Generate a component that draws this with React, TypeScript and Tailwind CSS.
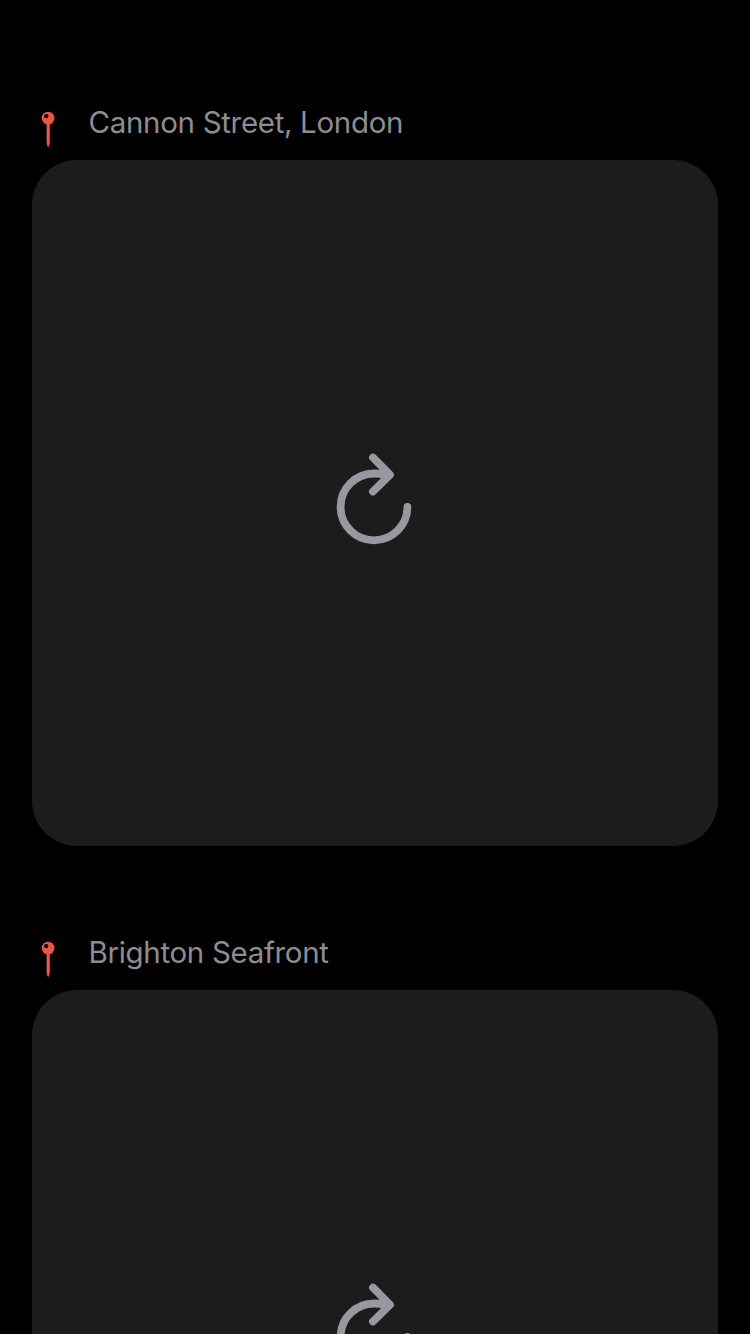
function PinIcon() {
  return (
    <svg className="h-10 w-8 shrink-0" viewBox="0 0 32 40" aria-hidden="true">
      <path fill="#eb5545" d="M14.6 13h3.2v19l-.6 3.6q-1 2.8-2 0l-.6-3.6z" />
      <circle cx="16.1" cy="8.1" r="6.4" fill="#eb5545" />
      <circle cx="14.2" cy="6.1" r="2.2" fill="#000" />
    </svg>
  );
}

function ReloadIcon() {
  return (
    <svg
      className="h-[110px] w-[100px]"
      viewBox="0 0 100 110"
      fill="none"
      stroke="#98989f"
      strokeWidth="7.8"
      strokeLinecap="round"
      strokeLinejoin="round"
      aria-hidden="true"
    >
      <path d="M82.4 61.9A33.4 33.4 0 1 1 49 28.5Q54.5 28.5 60 29.7" />
      <path d="M48 12.6 65 29.7 48 46.5" />
    </svg>
  );
}

function LocationCard({ name }: { name: string }) {
  return (
    <section className="shrink-0">
      <header className="flex h-[50px]">
        <PinIcon />
        <h2 className="ml-[24.5px] -mt-1.5 whitespace-nowrap font-['Inter',sans-serif] text-[29.5px] leading-[36px] font-normal tracking-[-0.32px] text-[#8d8d93]">
          {name}
        </h2>
      </header>
      <div className="flex h-[686px] justify-center rounded-[45px] bg-[#1c1c1c] pt-[285px]">
        <ReloadIcon />
      </div>
    </section>
  );
}

export default function App() {
  return (
    <main className="flex h-[1334px] w-[750px] flex-col gap-[94px] overflow-hidden bg-black px-8 pt-[110px]">
      <LocationCard name="Cannon Street, London" />
      <LocationCard name="Brighton Seafront" />
    </main>
  );
}
